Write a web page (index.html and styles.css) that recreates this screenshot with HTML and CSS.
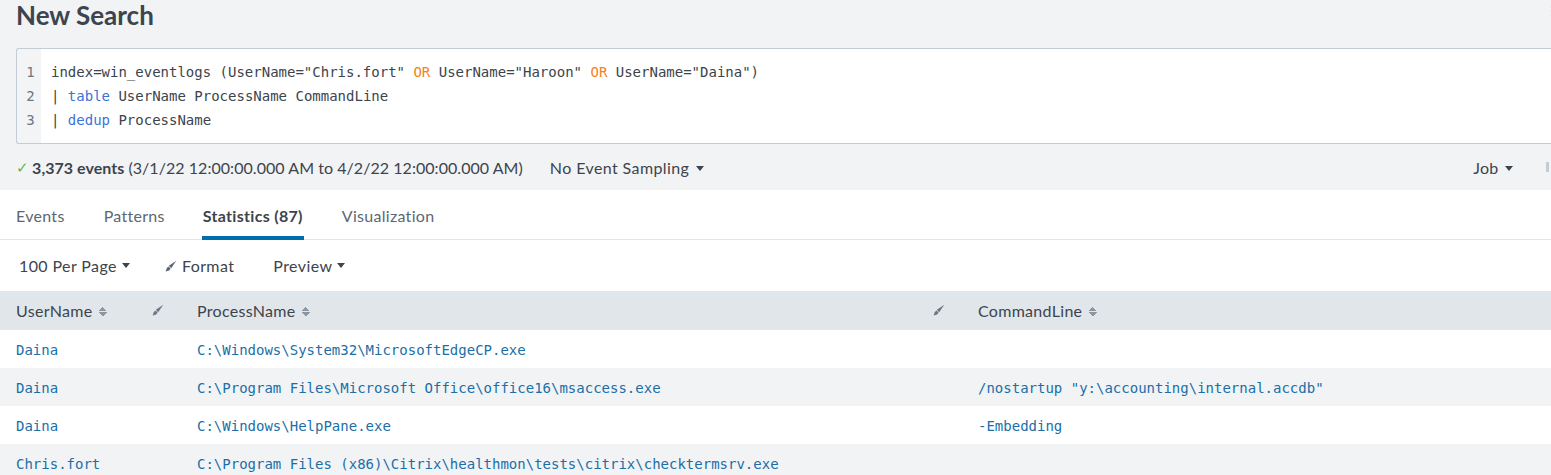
FILE: index.html
```html
<!DOCTYPE html>
<html>
<head>
<meta charset="utf-8">
<link rel="stylesheet" href="styles.css">
</head>
<body>
<div class="page">
  <header class="top">
    <h1 class="title">New Search</h1>
    <span class="kebab">⁝</span>
  </header>
  <div class="searchbox">
    <div class="gutter">
      <div class="ln">1</div>
      <div class="ln">2</div>
      <div class="ln">3</div>
    </div>
    <div class="code">
      <div class="line">index=win_eventlogs (UserName="Chris.fort" <span class="op">OR</span> UserName="Haroon" <span class="op">OR</span> UserName="Daina")</div>
      <div class="line">| <span class="cmd">table</span> UserName ProcessName CommandLine</div>
      <div class="line">| <span class="cmd">dedup</span> ProcessName</div>
    </div>
  </div>
  <div class="status">
    <div class="status-left">
      <span class="check">✓</span>
      <span class="count">3,373 events</span>
      <span class="range">(3/1/22 12:00:00.000 AM to 4/2/22 12:00:00.000 AM)</span>
      <span class="sampling">No Event Sampling <span class="caret"></span></span>
    </div>
    <div class="status-right">
      <span class="job">Job <span class="caret"></span></span>
      <span class="bar"></span>
    </div>
  </div>
  <nav class="tabs">
    <span class="tab">Events</span>
    <span class="tab">Patterns</span>
    <span class="tab active">Statistics (87)</span>
    <span class="tab">Visualization</span>
  </nav>
  <div class="toolbar">
    <span class="tool">100 Per Page <span class="caret"></span></span>
    <span class="tool fmt"><svg class="brush" width="12" height="12" viewBox="0 0 12 12"><path d="M11.3 0.7 L6.2 8.2 L3.8 5.8 Z" fill="#5c6773"/><path d="M3.5 6.4 L5.6 8.5 L4.2 10.4 L0.6 11.4 L1.8 8 Z" fill="#5c6773"/></svg> Format</span>
    <span class="tool">Preview <span class="caret"></span></span>
  </div>
  <table class="grid">
    <thead>
      <tr>
        <th class="c1"><div class="th-in"><span>UserName <span class="sort"></span></span><svg class="brush hb" width="12" height="12" viewBox="0 0 12 12"><path d="M11.3 0.7 L6.2 8.2 L3.8 5.8 Z" fill="#6b7785"/><path d="M3.5 6.4 L5.6 8.5 L4.2 10.4 L0.6 11.4 L1.8 8 Z" fill="#6b7785"/></svg></div></th>
        <th class="c2"><div class="th-in"><span>ProcessName <span class="sort"></span></span><svg class="brush hb" width="12" height="12" viewBox="0 0 12 12"><path d="M11.3 0.7 L6.2 8.2 L3.8 5.8 Z" fill="#6b7785"/><path d="M3.5 6.4 L5.6 8.5 L4.2 10.4 L0.6 11.4 L1.8 8 Z" fill="#6b7785"/></svg></div></th>
        <th class="c3"><div class="th-in"><span>CommandLine <span class="sort"></span></span></div></th>
      </tr>
    </thead>
    <tbody>
      <tr><td>Daina</td><td>C:\Windows\System32\MicrosoftEdgeCP.exe</td><td></td></tr>
      <tr><td>Daina</td><td>C:\Program Files\Microsoft Office\office16\msaccess.exe</td><td>/nostartup "y:\accounting\internal.accdb"</td></tr>
      <tr><td>Daina</td><td>C:\Windows\HelpPane.exe</td><td>-Embedding</td></tr>
      <tr><td>Chris.fort</td><td>C:\Program Files (x86)\Citrix\healthmon\tests\citrix\checktermsrv.exe</td><td></td></tr>
    </tbody>
  </table>
</div>
</body>
</html>
```
FILE: styles.css
```css
* { box-sizing: border-box; }
html, body { margin: 0; padding: 0; }
body {
  background: #ffffff;
  font-family: Lato, "Open Sans", sans-serif;
  color: #3c444d;
  overflow: hidden;
  width: 1551px;
  height: 475px;
}
.page { width: 1551px; }
.top {
  background: #f2f3f5;
  height: 48px;
  padding: 0 0 0 16px;
  display: flex;
  align-items: flex-start;
  justify-content: space-between;
}
.title {
  margin: 0;
  font-size: 26px;
  font-weight: 700;
  line-height: 30px;
  color: #3c444d;
}
.kebab {
  color: #9aa4ae;
  font-size: 14px;
  line-height: 14px;
  margin-top: 4px;
  margin-right: -3px;
}
.searchbox {
  background: #f2f3f5;
  padding: 0 0 0 16px;
  display: flex;
  height: 96px;
}
.searchbox .gutter {
  background: #f2f4f5;
  width: 25px;
  border: 1px solid #c3cbd4;
  border-right: none;
  border-radius: 3px 0 0 3px;
  padding-top: 11px;
  font-family: "DejaVu Sans Mono", monospace;
  font-size: 14px;
  color: #6b7785;
}
.ln { height: 24px; line-height: 24px; text-align: center; padding-left: 3px; }
.code {
  flex: 1;
  background: #fff;
  border-top: 1px solid #c3cbd4;
  border-bottom: 1px solid #c3cbd4;
  padding: 11px 0 0 10px;
  font-family: "DejaVu Sans Mono", monospace;
  font-size: 14px;
  color: #3c444d;
}
.line { height: 24px; line-height: 24px; white-space: pre; }
.op { color: #f58220; }
.cmd { color: #3a73d9; }
.status {
  background: #f2f3f5;
  height: 46px;
  display: flex;
  align-items: center;
  justify-content: space-between;
  padding: 0 0 0 16px;
  font-size: 16px;
}
.status-left { display: flex; align-items: center; letter-spacing: 0.05px; }
.check { color: #5cb85c; font-size: 15px; margin-right: 3px; }
.count { font-weight: 700; color: #3c444d; margin-right: 4px; }
.range { color: #3c444d; }
.sampling { margin-left: 27px; color: #3c444d; letter-spacing: 0.4px; }
.caret {
  display: inline-block;
  width: 0; height: 0;
  border-left: 4px solid transparent;
  border-right: 4px solid transparent;
  border-top: 5px solid #3c444d;
  vertical-align: middle;
  margin-left: 2px;
  margin-top: -2px;
}
.status-right { display: flex; align-items: center; }
.job { color: #3c444d; margin-right: 33px; letter-spacing: 0.3px; }
.bar { width: 3px; height: 10px; background: #c3cbd4; margin-right: 2px; }
.tabs {
  display: flex;
  height: 50px;
  border-bottom: 1px solid #e1e6eb;
  padding-left: 16px;
}
.tab {
  font-size: 16px;
  color: #5c6773;
  line-height: 52px;
  margin-right: 38px;
  height: 50px;
  letter-spacing: 0.3px;
}
.tab:first-child { margin-right: 39px; }
.tab.active {
  font-weight: 700;
  color: #3c444d;
  border-bottom: 4px solid #006eaa;
  margin-left: -1px;
  padding: 0 1px;
}
.toolbar {
  height: 51px;
  display: flex;
  align-items: center;
  padding-left: 19px;
  font-size: 16px;
  color: #3c444d;
  letter-spacing: 0.4px;
}
.tool { margin-right: 35px; display: inline-flex; align-items: center; }
.tool.fmt { margin-right: 39px; }
.tool .caret { margin-left: 5px; margin-top: 0; }
.fmt .brush { margin-right: 5px; }
.grid {
  width: 100%;
  border-collapse: collapse;
  table-layout: fixed;
}
.grid th {
  background: #e1e6eb;
  height: 39px;
  font-weight: 400;
  font-size: 16px;
  text-align: left;
  color: #3c444d;
  padding: 0 0 1px 16px;
  letter-spacing: 0.3px;
}
.grid th.c1 { width: 181px; }
.grid th.c2 { width: 781px; }
.th-in { display: flex; justify-content: space-between; align-items: center; padding-right: 17px; }
.sort {
  display: inline-block;
  width: 8px; height: 9px;
  vertical-align: middle;
  margin-left: 2px;
  margin-top: -2px;
  background:
    linear-gradient(to bottom right, transparent 50%, #8c96a1 50%) left top / 4px 4px no-repeat,
    linear-gradient(to bottom left, transparent 50%, #8c96a1 50%) right top / 4px 4px no-repeat,
    linear-gradient(to top right, transparent 50%, #8c96a1 50%) left bottom / 4px 4px no-repeat,
    linear-gradient(to top left, transparent 50%, #8c96a1 50%) right bottom / 4px 4px no-repeat;
}
.grid td {
  height: 38px;
  padding: 1px 0 0 16px;
  font-family: "DejaVu Sans Mono", monospace;
  font-size: 14px;
  color: #1a6fa8;
  white-space: pre;
}
.grid tbody tr:nth-child(even) td { background: #f2f3f5; }
```
